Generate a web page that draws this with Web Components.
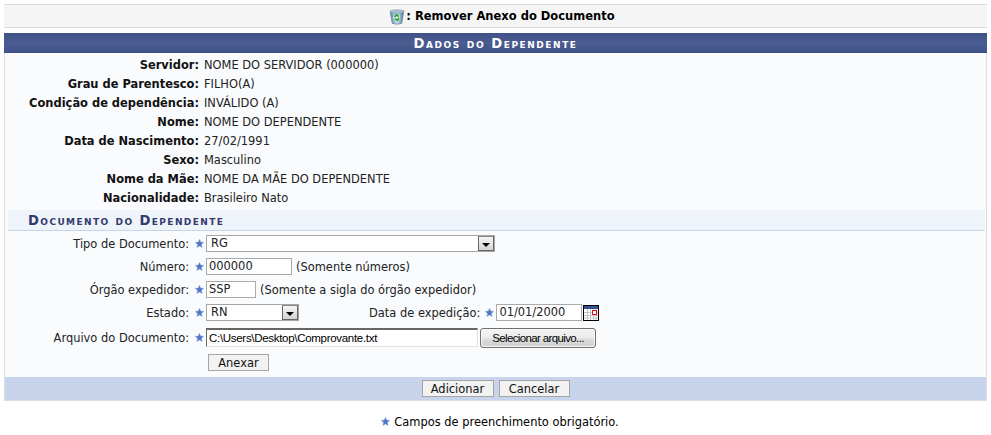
<!DOCTYPE html>
<html lang="pt-BR">
<head>
<meta charset="utf-8">
<title>Remover Anexo do Documento</title>
<style>
  body { margin: 0; background: #fff; font: 11.45px "DejaVu Sans", Verdana, sans-serif; color: #222; }
</style>
</head>
<body>
<sig-page>
  <sig-title>Remover Anexo do Documento</sig-title>
  <sig-panel caption="Dados do Dependente">
    <sig-info label="Servidor">NOME DO SERVIDOR (000000)</sig-info>
    <sig-info label="Grau de Parentesco">FILHO(A)</sig-info>
    <sig-info label="Condição de dependência">INVÁLIDO (A)</sig-info>
    <sig-info label="Nome">NOME DO DEPENDENTE</sig-info>
    <sig-info label="Data de Nascimento">27/02/1991</sig-info>
    <sig-info label="Sexo">Masculino</sig-info>
    <sig-info label="Nome da Mãe">NOME DA MÃE DO DEPENDENTE</sig-info>
    <sig-info label="Nacionalidade">Brasileiro Nato</sig-info>

    <sig-section>Documento do Dependente</sig-section>

    <sig-field label="Tipo de Documento" style="height:23px">
      <sig-select value="RG" width="289"></sig-select>
    </sig-field>
    <sig-field label="Número" style="height:23px">
      <sig-text value="000000" width="86"></sig-text><sig-hint>(Somente números)</sig-hint>
    </sig-field>
    <sig-field label="Órgão expedidor" style="height:23px">
      <sig-text value="SSP" width="50"></sig-text><sig-hint>(Somente a sigla do órgão expedidor)</sig-hint>
    </sig-field>
    <sig-field label="Estado" style="height:23px">
      <sig-select value="RN" width="93"></sig-select>
      <sig-date label="Data de expedição" value="01/01/2000"></sig-date>
    </sig-field>
    <sig-field label="Arquivo do Documento" style="height:27px">
      <sig-file value="C:\Users\Desktop\Comprovante.txt"></sig-file>
    </sig-field>
    <sig-field style="height:23px">
      <sig-button style="margin-left:2px" width="61">Anexar</sig-button>
    </sig-field>

    <sig-actions slot="footer">
      <sig-button width="72">Adicionar</sig-button>
      <sig-button width="71">Cancelar</sig-button>
    </sig-actions>
  </sig-panel>
  <sig-note>Campos de preenchimento obrigatório.</sig-note>
</sig-page>

<script>
const STAR = `<svg width="9" height="9" viewBox="0 0 9 9" style="display:block"><path d="M4.5 0.3 5.7 3.1 8.8 3.4 6.4 5.4 7.2 8.6 4.5 6.9 1.8 8.6 2.6 5.4 0.2 3.4 3.3 3.1Z" fill="#4f77c8" stroke="#8aa3dc" stroke-width=".4"/></svg>`

class SigPage extends HTMLElement {
  constructor() {
    super()
    this.attachShadow({ mode: 'open' })
    this.shadowRoot.innerHTML = `
      <style>
        :host { display: block; padding: 4px 4px 0; }
      </style>
      <slot></slot>
    `
  }
}

class SigTitle extends HTMLElement {
  constructor() {
    super()
    this.attachShadow({ mode: 'open' })
    this.shadowRoot.innerHTML = `
      <style>
        :host {
          display: flex; align-items: center; justify-content: center;
          height: 22px; margin-bottom: 5px; padding-left: 13px;
          background: #f5f5f5;
          border-top: 1px solid #ddd; border-bottom: 1px solid #ddd;
          font: bold 11.5px "DejaVu Sans", Verdana, sans-serif; color: #000;
        }
        svg { display: block; margin-right: 1px; margin-top: 1px; }
      </style>
      <svg width="16" height="16" viewBox="0 0 17 17">
        <defs>
          <linearGradient id="bin" x1="0" x2="1">
            <stop offset="0" stop-color="#4f86b4"/><stop offset=".5" stop-color="#cfe0ea"/><stop offset="1" stop-color="#4577a3"/>
          </linearGradient>
        </defs>
        <path d="M1.2 2.5 15.8 2 13.6 15.2Q8.5 17.2 3.4 15.2Z" fill="url(#bin)" stroke="#5f7f98" stroke-width=".7"/>
        <ellipse cx="8.5" cy="2.6" rx="7.2" ry="1.8" fill="#a9c0cf" stroke="#7d9bb0" stroke-width=".6"/>
        <circle cx="8.3" cy="9" r="3.6" fill="#d6efd2"/>
        <path d="M6 8.5 8 6 10.5 8M10.8 9.5 9 12 6 10.5" fill="none" stroke="#2a9a35" stroke-width="1.7"/>
      </svg>
      <span>: <slot></slot></span>
    `
  }
}

class SigPanel extends HTMLElement {
  constructor() {
    super()
    this.attachShadow({ mode: 'open' })
    this.shadowRoot.innerHTML = `
      <style>
        :host { display: block; }
        header {
          height: 20px; text-align: center;
          background: linear-gradient(#3f5186 0, #4a5c90 50%, #3f5186 100%);
          color: #fff;
          font: bold 13.2px/21px "DejaVu Sans", Verdana, sans-serif;
          font-variant: small-caps; letter-spacing: 1.55px;
        }
        .body {
          background: #f9fbfd;
          border-left: 1px solid #ddd; border-right: 1px solid #ddd;
          padding-top: 2px; height: 324px; box-sizing: border-box;
        }
        footer {
          height: 24px; box-sizing: border-box; background: #c8d4eb;
          border-left: 1px solid #ddd; border-right: 1px solid #ddd;
          border-bottom: 1px solid #ddd;
        }
      </style>
      <header></header>
      <div class="body"><slot></slot></div>
      <footer><slot name="footer"></slot></footer>
    `
    this.shadowRoot.querySelector('header').textContent = this.getAttribute('caption')
  }
}

class SigInfo extends HTMLElement {
  constructor() {
    super()
    this.attachShadow({ mode: 'open' })
    this.shadowRoot.innerHTML = `
      <style>
        :host { display: flex; height: 19px; align-items: center; color: #222; }
        b { width: 194px; text-align: right; margin-right: 5px; color: #111; flex: none; }
      </style>
      <b></b><span><slot></slot></span>
    `
    this.shadowRoot.querySelector('b').textContent = this.getAttribute('label') + ':'
  }
}

class SigSection extends HTMLElement {
  constructor() {
    super()
    this.attachShadow({ mode: 'open' })
    this.shadowRoot.innerHTML = `
      <style>
        :host {
          display: block; height: 20px; margin: 3px 1px 1px 3px; padding-left: 20px;
          background: #eff3fa; border-bottom: 1px solid #c8d4eb;
          font: bold 13.2px/21px "DejaVu Sans", Verdana, sans-serif;
          font-variant: small-caps; letter-spacing: 1.4px; color: #333a6e;
        }
      </style>
      <slot></slot>
    `
  }
}

class SigField extends HTMLElement {
  constructor() {
    super()
    this.attachShadow({ mode: 'open' })
    this.shadowRoot.innerHTML = `
      <style>
        :host { display: flex; align-items: center; }
        .label { width: 184px; margin-right: 6px; text-align: right; flex: none; }
        .star { width: 11px; flex: none; }
        :host(:not([label])) .star { visibility: hidden; }
      </style>
      <span class="label"></span>
      <span class="star">${STAR}</span>
      <slot></slot>
    `
    const label = this.getAttribute('label')
    this.shadowRoot.querySelector('.label').textContent = label ? label + ':' : ''
  }
}

class SigText extends HTMLElement {
  constructor() {
    super()
    this.attachShadow({ mode: 'open' })
    this.shadowRoot.innerHTML = `
      <style>
        :host {
          display: block; box-sizing: border-box; height: 17px; flex: none;
          border: 1px solid #aaa; background: #fff;
          padding-left: 2px; line-height: 15px; color: #222;
        }
      </style>
      <span></span>
    `
    this.style.width = this.getAttribute('width') + 'px'
    this.shadowRoot.querySelector('span').textContent = this.getAttribute('value')
  }
}

class SigHint extends HTMLElement {
  constructor() {
    super()
    this.attachShadow({ mode: 'open' })
    this.shadowRoot.innerHTML = `
      <style>:host { display: block; margin-left: 4px; }</style>
      <slot></slot>
    `
  }
}

class SigSelect extends HTMLElement {
  constructor() {
    super()
    this.attachShadow({ mode: 'open' })
    this.shadowRoot.innerHTML = `
      <style>
        :host {
          display: flex; box-sizing: border-box; height: 17px; flex: none;
          border: 1px solid #a5a5a5; background: #fff;
          line-height: 15px; color: #222; position: relative;
        }
        span { flex: 1; padding-left: 4px; }
        i {
          display: block; width: 16px; flex: none; box-sizing: border-box;
          background: linear-gradient(#f4f4f4, #d4d4d4);
          border: 1px solid #666; border-top-color: #888;
          position: relative;
        }
        i::after {
          content: ""; position: absolute; left: 3px; top: 6px;
          border: 4px solid transparent; border-top-color: #000; border-bottom: 0;
        }
      </style>
      <span></span><i></i>
    `
    this.style.width = this.getAttribute('width') + 'px'
    this.shadowRoot.querySelector('span').textContent = this.getAttribute('value')
  }
}

class SigDate extends HTMLElement {
  constructor() {
    super()
    this.attachShadow({ mode: 'open' })
    this.shadowRoot.innerHTML = `
      <style>
        :host { display: flex; align-items: center; margin-left: 70px; }
        .star { margin: 0 2px 0 5px; }
        svg.cal { display: block; margin-left: 1px; }
      </style>
      <span class="label"></span>
      <span class="star">${STAR}</span>
      <sig-text width="86"></sig-text>
      <svg class="cal" width="16" height="16" viewBox="0 0 16 16">
        <rect x=".5" y=".5" width="15" height="15" fill="#fff" stroke="#000"/>
        <rect x="1" y="1" width="14" height="3" fill="#33508f"/>
        <path d="M1 7.5H15M1 10.5H15M1 13H15M4.5 4V15M7.5 4V15M10.5 4V15M13 4V15" stroke="#c4c4c4" fill="none"/>
        <rect x="9.5" y="5.5" width="4" height="4" fill="#fff" stroke="#e0101a"/>
      </svg>
    `
    const value = this.getAttribute('value')
    this.shadowRoot.querySelector('.label').textContent = this.getAttribute('label') + ':'
    this.shadowRoot.querySelector('sig-text').setAttribute('value', value)
    this.shadowRoot.querySelector('sig-text').shadowRoot.querySelector('span').textContent = value
  }
}

class SigFile extends HTMLElement {
  constructor() {
    super()
    this.attachShadow({ mode: 'open' })
    this.shadowRoot.innerHTML = `
      <style>
        :host { display: flex; align-items: center; font: 11.5px "Liberation Sans", Arial, sans-serif; color: #000; }
        .path {
          box-sizing: border-box; width: 272px; height: 19px; padding-left: 2px; line-height: 16px;
          background: #fff; letter-spacing: -.3px;
          border-style: solid; border-width: 2px 1px 1px 1px;
          border-color: #666 #e3e3e3 #e3e3e3 #666;
        }
        .pick {
          box-sizing: border-box; width: 116px; height: 20px; margin-left: 2px;
          text-align: center; line-height: 19px; font-size: 11.5px; letter-spacing: -.63px;
          border: 1px solid #707070; border-radius: 3px;
          background: linear-gradient(#f3f3f3 0, #ececec 50%, #dcdcdc 55%, #cfcfcf 100%);
          box-shadow: inset 0 0 0 1px #f8f8f8;
        }
      </style>
      <div class="path"></div>
      <div class="pick">Selecionar arquivo...</div>
    `
    this.shadowRoot.querySelector('.path').textContent = this.getAttribute('value')
  }
}

class SigButton extends HTMLElement {
  constructor() {
    super()
    this.attachShadow({ mode: 'open' })
    this.shadowRoot.innerHTML = `
      <style>
        :host {
          display: block; box-sizing: border-box; height: 17px; text-align: center;
          border: 1px solid #a5a5a5; background: #f2f2f2; color: #111;
          line-height: 16px; flex: none; cursor: default;
        }
      </style>
      <slot></slot>
    `
    this.style.width = this.getAttribute('width') + 'px'
  }
}

class SigActions extends HTMLElement {
  constructor() {
    super()
    this.attachShadow({ mode: 'open' })
    this.shadowRoot.innerHTML = `
      <style>
        :host { display: flex; justify-content: center; align-items: center; gap: 5px; height: 23px; }
      </style>
      <slot></slot>
    `
  }
}

class SigNote extends HTMLElement {
  constructor() {
    super()
    this.attachShadow({ mode: 'open' })
    this.shadowRoot.innerHTML = `
      <style>
        :host { display: flex; justify-content: center; align-items: center; gap: 4px; margin-top: 13px; padding-left: 9px; height: 15px; color: #000; }
      </style>
      ${STAR}<span><slot></slot></span>
    `
  }
}

customElements.define('sig-page', SigPage)
customElements.define('sig-title', SigTitle)
customElements.define('sig-panel', SigPanel)
customElements.define('sig-info', SigInfo)
customElements.define('sig-section', SigSection)
customElements.define('sig-text', SigText)
customElements.define('sig-hint', SigHint)
customElements.define('sig-select', SigSelect)
customElements.define('sig-date', SigDate)
customElements.define('sig-file', SigFile)
customElements.define('sig-button', SigButton)
customElements.define('sig-actions', SigActions)
customElements.define('sig-field', SigField)
customElements.define('sig-note', SigNote)
</script>
</body>
</html>
